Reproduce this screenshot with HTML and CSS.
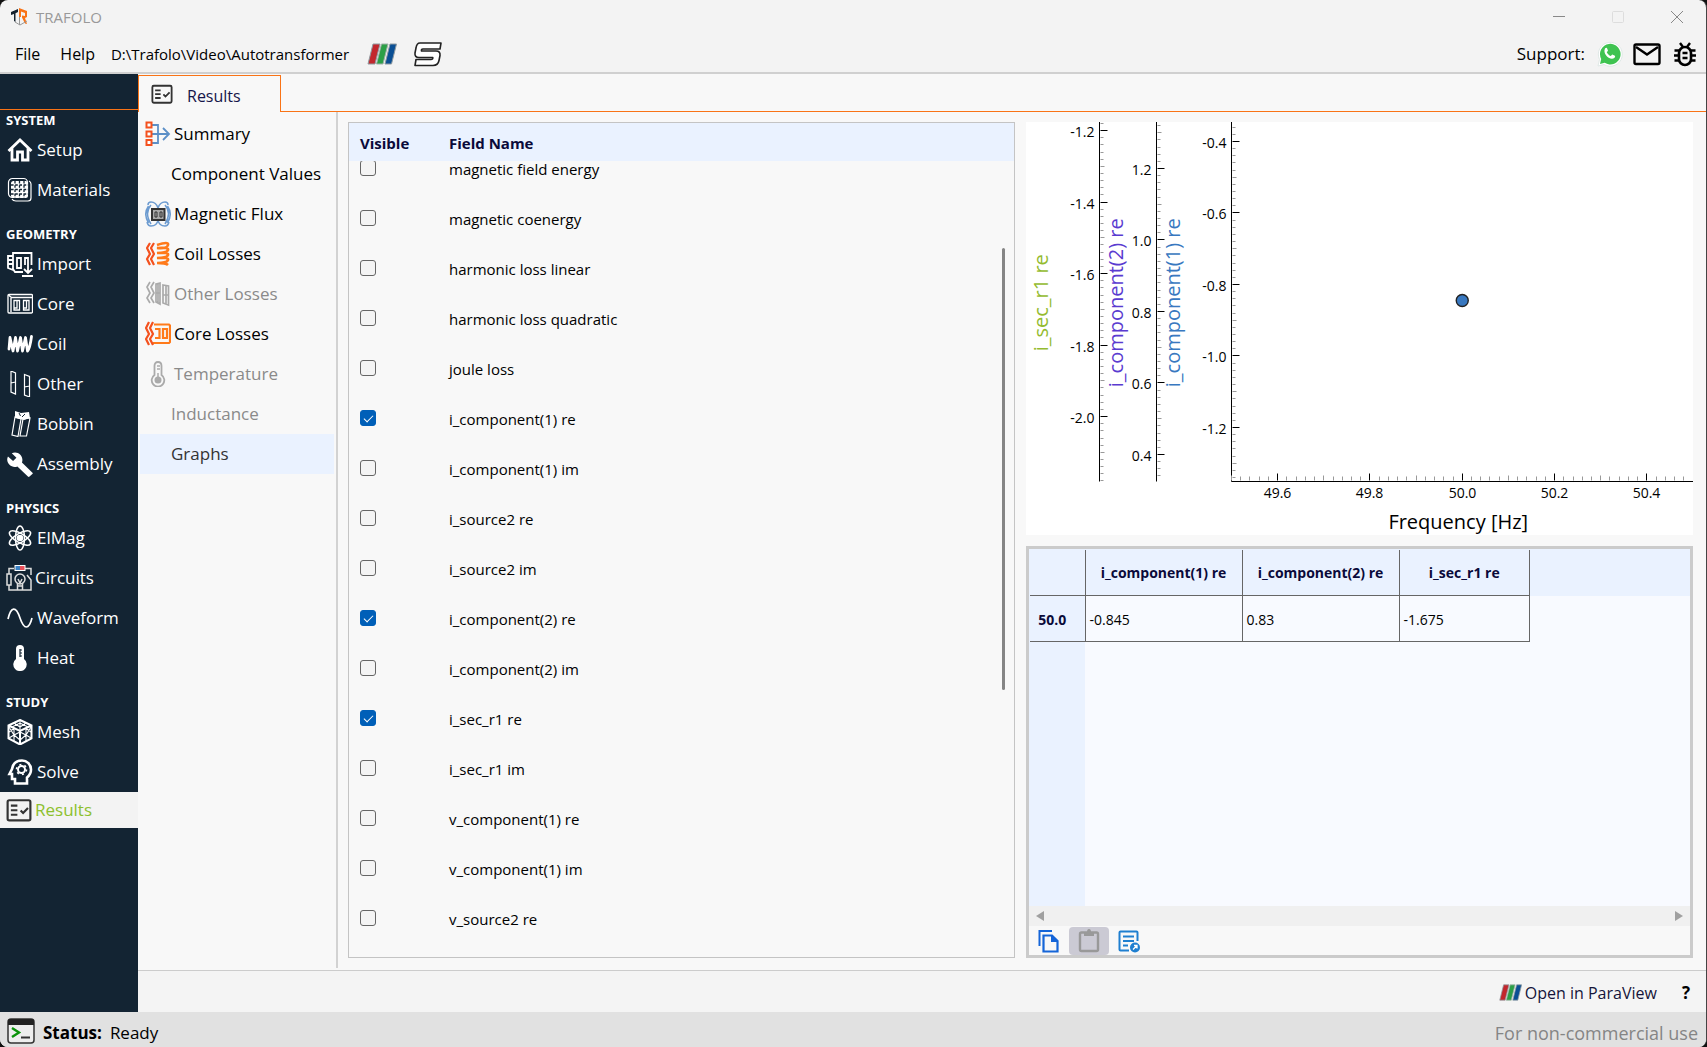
FILE: index.html
```html
<!DOCTYPE html>
<html lang="en">
<head>
<meta charset="utf-8">
<title>TRAFOLO</title>
<link rel="stylesheet" href="styles.css">
</head>
<body>
<svg class="defs" aria-hidden="true">
  <symbol id="paraview" viewBox="0 0 30 22">
    <path d="M6 1h7L8 21H1z" fill="#c2272d" stroke="#8f9aa0"/>
    <path d="M14.500 1h6.500L16 21H9.500z" fill="#2c9f47" stroke="#9fb0a8"/>
    <path d="M23 1h6.500L24.500 21H18z" fill="#0b4f94" stroke="#8f9aa0"/>
  </symbol>
  <symbol id="checklist" viewBox="0 0 24 24">
    <rect x="1.500" y="3" width="21" height="18.500" rx="1.500" fill="none" stroke="#333" stroke-width="2"/>
    <path d="M4.500 8h6M4.500 12.200h6M4.500 16.400h6M13.500 12.500l2.300 2.300 4.500-4.600" fill="none" stroke="#333" stroke-width="2"/>
  </symbol>
</svg>
<div class="window">
  <header class="titlebar">
    <svg class="logo" viewBox="0 0 18 20"><path d="M1 5l7-3v3L5.500 6.200V15L4 14V7L1 8z" fill="#15222e"/><path d="M9 1l8 3v6l-2 1 2 6-2-.5-3-6v-2l3 .5V6L11 4.500V10L9 10z" fill="#f97316"/><path d="M5 15l5 3 7-4M9.500 10v8" fill="none" stroke="#999"/></svg>
    <span class="app-name">TRAFOLO</span>
    <div class="window-buttons">
      <button type="button" aria-label="Minimize"><svg viewBox="0 0 14 14"><path d="M1 6.500h12" stroke="#888"/></svg></button>
      <button type="button" aria-label="Maximize" disabled><svg viewBox="0 0 14 14"><rect x="1.500" y="1.500" width="11" height="11" rx="1" fill="none" stroke="#ddd"/></svg></button>
      <button type="button" aria-label="Close"><svg viewBox="0 0 14 14"><path d="M1 1l12 12M13 1L1 13" stroke="#888"/></svg></button>
    </div>
  </header>
  <div class="menubar">
    <button type="button">File</button>
    <button type="button">Help</button>
    <span class="path">D:\Trafolo\Video\Autotransformer</span>
    <button type="button" class="tool" aria-label="ParaView"><svg class="pv-large"><use href="#paraview"/></svg></button>
    <button type="button" class="tool" aria-label="Simulation"><svg class="pv-large s-logo" viewBox="0 0 30 26"><path d="M7 2h21l-1 6H10q-2 0-1.500 2h14.500q4.500 0 4 4.500l-1 5q-1 5-6 5H2l1-6H18q2 0 1.800-2H6q-4.500 0-4-4.500l1-5Q3.700 2 7 2z" fill="#fff" stroke="#222" stroke-width="1.600" stroke-linejoin="round"/></svg></button>
    <div class="support">
      <span>Support:</span>
      <a href="#whatsapp" aria-label="WhatsApp"><svg viewBox="0 0 28 28"><path d="M3 26l1.500-6.500A12 12 0 1 1 9 24.500z" fill="#fff" stroke="#dfe8e6"/><path d="M5 24l1.200-5A10.300 10.300 0 1 1 9.700 22.800z" fill="#3fc351"/><path d="M10 8.500c1-1 2-.8 2.300.2l.7 2-1.200 1.500c.8 1.900 2.200 3 4 3.800l1.400-1.500 2.300 1c1 .5.8 1.600-.2 2.600-4.500 3-12-4.500-9.300-9.600z" fill="#fff"/></svg></a>
      <a href="#mail" aria-label="Mail"><svg viewBox="0 0 28 28"><rect x="1.500" y="4.500" width="25" height="19.500" rx="1.500" fill="none" stroke="#000" stroke-width="2.400"/><path d="M3 7l11 7.500L25 7" fill="none" stroke="#000" stroke-width="2.400"/></svg></a>
      <a href="#bug" aria-label="Report a bug"><svg viewBox="0 0 28 28"><rect x="8" y="7" width="12" height="18" rx="6" fill="none" stroke="#000" stroke-width="2.600"/><path d="M11.500 13h5M11.500 18h5M3.500 10.500h5M3 15.500h5M3.500 20.500h5M24.500 10.500h-5M25 15.500h-5M24.500 20.500h-5M9 3l3 4M19 3l-3 4" stroke="#000" stroke-width="2.400"/></svg></a>
    </div>
  </div>

  <div class="workspace">
    <nav class="sidebar" aria-label="Modules">
      <h2 class="first">SYSTEM</h2>
      <button type="button"><svg viewBox="0 0 26 26"><path d="M1.500 14L13 3l11.500 11M5 11.500V23h5.500v-8h5v8H21V11.500" fill="none" stroke="#fff" stroke-width="2.800"/></svg>Setup</button>
      <button type="button"><svg viewBox="0 0 26 26"><g fill="none" stroke="#fff" stroke-width="1.200"><rect x="1.500" y="1.500" width="19" height="19" rx="4"/><path d="M22 4q2 1 2 3v14q0 3-3 3H9q-3 0-4-2"/></g><rect x="4" y="4" width="17" height="17" rx="2.500" fill="#fff"/><path d="M8 4v17M12.500 4v17M17 4v17M4 8h17M4 12.500h17M4 17h17" stroke="#132433" stroke-width="1.300" stroke-dasharray="2.600 1.600"/></svg>Materials</button>
      <h2>GEOMETRY</h2>
      <button type="button"><svg viewBox="0 0 26 26"><g fill="none" stroke="#fff" stroke-width="1.800"><path d="M16 21H8l-2-3V2h18.500v12M6 5H1v12l5 2M1 9h5M1 13h5"/><path d="M10 7h4v10h-4zM18 14V7h3v5M21 12v9M17 18l4 4 4-4M15 25h11"/></g></svg>Import</button>
      <button type="button"><svg viewBox="0 0 26 26"><g fill="none" stroke="#fff"><rect x="1" y="3.500" width="24.500" height="18.500" rx="1" stroke-width="1.300"/><path d="M1.500 4l3 2.500h20.500" stroke-width="1.400"/><path d="M4 7v14" stroke-width="1.400"/><path d="M7 9.500h5.500V19H7zM16.500 9.500H22V19h-5.500zM10 10v7H7M19.500 10v7h-3" stroke-width="1.300"/></g></svg>Core</button>
      <button type="button"><svg viewBox="0 0 26 26"><path d="M2 18L3 6.500 6 20 8.500 6.500 10.500 20 13.500 6.500 15.500 20 18.500 6.500 20.500 20Q23 17 24.500 5.500" fill="none" stroke="#fff" stroke-width="2.800" stroke-linecap="round" stroke-linejoin="round"/></svg>Coil</button>
      <button type="button"><svg viewBox="0 0 26 26"><path d="M4 0l4.500 2v21L4 21zM4 12l4.500-1M17.500 3.500l5 2V26l-5-2zM17.500 16l5-1" fill="none" stroke="#fff" stroke-width="1.200"/></svg>Other</button>
      <button type="button"><svg viewBox="0 0 26 26"><path d="M8 6L5 24l6 1.500L14 8zM16 8l-3 17h6.500L23 7z" fill="none" stroke="#fff" stroke-width="1.200"/><path d="M8 0l6 2 8-1 1 6-6 2-9-2z" fill="#fff"/><path d="M12 2l1.500 3M15 6l3-3" stroke="#132433"/></svg>Bobbin</button>
      <button type="button"><svg viewBox="0 0 24 24"><path d="M23.500 20l-9.700-9.400c.9-2.300.4-5-1.500-7.200-2-2.200-5.400-2.600-7.900-1.400L8.700 6.200 5.600 9.200.9 5C-.4 7.500.1 10.600 2.300 12.700c2 2 4.800 2.500 7.300 1.500l9.700 9.400c.4.500 1.100.5 1.500 0l2.600-2.300c.5-.4.500-1 .1-1.300z" fill="#fff"/></svg>Assembly</button>
      <h2>PHYSICS</h2>
      <button type="button"><svg viewBox="0 0 26 26"><g fill="none" stroke="#fff" stroke-width="1.500"><ellipse cx="13" cy="13" rx="4.500" ry="12"/><ellipse cx="13" cy="13" rx="4.500" ry="12" transform="rotate(60 13 13)"/><ellipse cx="13" cy="13" rx="4.500" ry="12" transform="rotate(-60 13 13)"/></g><circle cx="13" cy="13" r="3.300" fill="#fff"/></svg>ElMag</button>
      <button type="button" class="tight"><svg viewBox="0 0 26 26"><g fill="none" stroke="#ddd" stroke-width="1.500"><path d="M8 3.500H3V9M3 20v5h22V15l-4-5M18 3.500h7V10"/><rect x="1" y="9" width="4" height="11"/><circle cx="14" cy="14" r="5"/><path d="M11.500 18v7M16.500 18v7M12 14l2 4 2-4M11.500 21h5"/></g><path d="M8.500 0h11v6h-11z" fill="#fff"/><path d="M9.500 1H14v4H9.500z" fill="#3b82c4"/><path d="M14 1h4.500v4H14z" fill="#e8505b"/></svg>Circuits</button>
      <button type="button"><svg viewBox="0 0 26 26"><path d="M1 14C4 1 9 1 13 13s9 12 12 0" fill="none" stroke="#fff" stroke-width="1.700"/></svg>Waveform</button>
      <button type="button"><svg viewBox="0 0 26 26"><path d="M9 14V4q0-4 4-4t4 4v10a6.700 6.700 0 1 1-8 0z" fill="#fff"/><path d="M13 4v8M13 5h2M13 8h2M13 11h2" stroke="#132433" stroke-width="1.200"/></svg>Heat</button>
      <h2>STUDY</h2>
      <button type="button"><svg viewBox="0 0 26 26"><g fill="none" stroke="#fff"><path d="M13 1l11.500 5.500v13L13 25.500 1.500 19.500v-13zM1.500 6.500L13 12l11.500-5.500M13 12v13" stroke-width="2"/><path d="M7 4l6 4 6-4M13 1v11M5 8l8-4 8 4M2 13l5-3.500V22M2 19l5-3 6 5M2 8l5 8 6-3M13 21l6-5 5 3M24 8l-5 8-6-3M19 9.500V22M24 13l-5-3.500" stroke-width="1.100"/></g></svg>Mesh</button>
      <button type="button"><svg viewBox="0 0 26 26"><path d="M8 24.500V20H5v-5H2.500L5 10C6 4 10 1.500 15 1.500c5 0 9 4 9 9 0 4-1.500 6-4 8v6z" fill="none" stroke="#fff" stroke-width="2.600"/><circle cx="14.500" cy="10.500" r="3.500" fill="none" stroke="#fff" stroke-width="2"/><circle cx="14.500" cy="10.500" r="5" fill="none" stroke="#fff" stroke-width="1.600" stroke-dasharray="2 3.200"/></svg>Solve</button>
      <button type="button" class="tight active" aria-current="page"><svg viewBox="0 0 24 24"><use href="#checklist"/></svg>Results</button>
    </nav>

    <main class="content">
      <div class="tabs" role="tablist">
        <button type="button" role="tab" aria-selected="true"><svg viewBox="0 0 24 24"><use href="#checklist"/></svg><span>Results</span></button>
        <div class="tab-rest"></div>
      </div>
      <div class="body">
        <nav class="subnav" aria-label="Results">
          <button type="button"><svg viewBox="0 0 26 26"><path d="M7 4h6v18H7M7 13h17M18 7l6 6-6 6" fill="none" stroke="#5b8fc7" stroke-width="1.800"/><path d="M1.500 1.500h5v5h-5zM1.500 10.500h5v5h-5zM1.500 19h5v5h-5z" fill="#fff" stroke="#f4511e" stroke-width="2"/></svg>Summary</button>
          <button type="button" class="plain">Component Values</button>
          <button type="button"><svg viewBox="0 0 26 26"><g fill="none" stroke="#6c9bd0" stroke-width="1.500"><path d="M6 4Q-1 12 6 23M3.500 5Q-2 13 3.500 22M20 4q7 8 0 19M22.500 5q5.500 8 0 17M13 7Q11 1 6 1 3 1 3 4M13 7q2-6 7-6 3 0 3 3M13 19q-1 6-7 6-3 0-4-4M13 19q1 6 7 6 3 0 4-4"/></g><rect x="7" y="8" width="12.500" height="11" fill="#aaa" stroke="#333" stroke-width="2"/><path d="M10 11h2v5h-2zM15 11h2v5h-2z" fill="none" stroke="#333"/></svg>Magnetic Flux</button>
          <button type="button"><svg viewBox="0 0 26 26"><path d="M5 2L2 7 5 13 2 18 5 24M9 2L6 7 9 13 6 18 9 24" fill="none" stroke="#f4511e" stroke-width="2.200" stroke-linejoin="round"/><path d="M12 4q12-4 11 0t-11 3q12-1 11 2t-11 3q12-1 11 2t-11 3q12-1 11 2t-11 3q9 0 11 2" fill="none" stroke="#ff7a1a" stroke-width="2.600"/></svg>Coil Losses</button>
          <button type="button" disabled><svg viewBox="0 0 26 26"><path d="M5 1L2 6 5 12 2 17 5 22M9 1L6 6 9 12 6 17 9 22M11 3l4-1v21l-4-2zM18 4l5.500 1v19L18 22zM13 3v19M21 5v18M11 12h4M18 14h5" fill="none" stroke="#aaa" stroke-width="1.700"/></svg>Other Losses</button>
          <button type="button"><svg viewBox="0 0 26 26"><path d="M9 3.500h15l1 1V21l-1 1H8M10 8h4.500v9H10M18 8h4v9h-4z" fill="none" stroke="#ff7a1a" stroke-width="2.200"/><path d="M4 1L1 7 4 13 1 18 4 24M8 1L5 7 8 13 5 18 8 24" fill="none" stroke="#f4511e" stroke-width="2.200" stroke-linejoin="round"/></svg>Core Losses</button>
          <button type="button" disabled><svg viewBox="0 0 26 26"><path d="M9.500 14V5q0-4 3.500-4t3.500 4v9a6.300 6.300 0 1 1-7 0z" fill="none" stroke="#aaa" stroke-width="1.800"/><circle cx="13" cy="19" r="3.500" fill="#aaa"/><path d="M13 12v6M12 5h3M12 8h3" stroke="#aaa" stroke-width="1.500"/></svg>Temperature</button>
          <button type="button" class="plain" disabled>Inductance</button>
          <button type="button" class="plain active" aria-current="true">Graphs</button>
        </nav>

        <div class="panes">
          <section class="fields">
            <div class="fields-scroll">
              <table>
                <thead><tr><th class="col-visible" scope="col">Visible</th><th scope="col">Field Name</th></tr></thead>
                <tbody>
                  <tr><td><input type="checkbox" id="f1"></td><td><label for="f1">magnetic field energy</label></td></tr>
                  <tr><td><input type="checkbox" id="f2"></td><td><label for="f2">magnetic coenergy</label></td></tr>
                  <tr><td><input type="checkbox" id="f3"></td><td><label for="f3">harmonic loss linear</label></td></tr>
                  <tr><td><input type="checkbox" id="f4"></td><td><label for="f4">harmonic loss quadratic</label></td></tr>
                  <tr><td><input type="checkbox" id="f5"></td><td><label for="f5">joule loss</label></td></tr>
                  <tr><td><input type="checkbox" id="f6" checked></td><td><label for="f6">i_component(1) re</label></td></tr>
                  <tr><td><input type="checkbox" id="f7"></td><td><label for="f7">i_component(1) im</label></td></tr>
                  <tr><td><input type="checkbox" id="f8"></td><td><label for="f8">i_source2 re</label></td></tr>
                  <tr><td><input type="checkbox" id="f9"></td><td><label for="f9">i_source2 im</label></td></tr>
                  <tr><td><input type="checkbox" id="f10" checked></td><td><label for="f10">i_component(2) re</label></td></tr>
                  <tr><td><input type="checkbox" id="f11"></td><td><label for="f11">i_component(2) im</label></td></tr>
                  <tr><td><input type="checkbox" id="f12" checked></td><td><label for="f12">i_sec_r1 re</label></td></tr>
                  <tr><td><input type="checkbox" id="f13"></td><td><label for="f13">i_sec_r1 im</label></td></tr>
                  <tr><td><input type="checkbox" id="f14"></td><td><label for="f14">v_component(1) re</label></td></tr>
                  <tr><td><input type="checkbox" id="f15"></td><td><label for="f15">v_component(1) im</label></td></tr>
                  <tr><td><input type="checkbox" id="f16"></td><td><label for="f16">v_source2 re</label></td></tr>
                </tbody>
              </table>
            </div>
            <div class="thumb"></div>
          </section>

          <div class="results">
            <div class="chart"><svg id="chart" role="img" aria-label="Frequency chart"></svg></div>
            <section class="data">
              <div class="data-area">
                <table>
                  <thead><tr><th class="corner"></th><th class="wide" scope="col">i_component(1) re</th><th class="wide" scope="col">i_component(2) re</th><th class="narrow" scope="col">i_sec_r1 re</th></tr></thead>
                  <tbody><tr><th scope="row">50.0</th><td>-0.845</td><td>0.83</td><td>-1.675</td></tr></tbody>
                </table>
              </div>
              <div class="hscroll">
                <svg viewBox="0 0 8 12"><path d="M8 1v10L0 6z" fill="#a0a0a0"/></svg>
                <svg viewBox="0 0 8 12"><path d="M0 1v10l8-5z" fill="#a0a0a0"/></svg>
              </div>
              <div class="data-tools">
                <button type="button" aria-label="Copy"><svg viewBox="0 0 24 24"><path d="M2.500 17V2H15" fill="none" stroke="#1565d8" stroke-width="2"/><path d="M6.500 6.500H15l5.500 5.500v10.500h-14z" fill="none" stroke="#1565d8" stroke-width="2.200"/><path d="M14 6v7h7z" fill="#1565d8"/></svg></button>
                <button type="button" class="muted" aria-label="Paste" disabled><svg viewBox="0 0 24 24"><rect x="3" y="3.500" width="18" height="18.500" rx="1.500" fill="none" stroke="#999" stroke-width="2.400"/><path d="M7 3h3q0-3 2-3t2 3h3v4H7z" fill="#999"/></svg></button>
                <button type="button" aria-label="Export"><svg viewBox="0 0 24 24"><path d="M12 21.500H3.500q-1 0-1-1v-17q0-1 1-1h16q1 0 1 1V12" fill="none" stroke="#1f7fd0" stroke-width="2"/><path d="M6 7.500h11M6 12h11M6 16.500h5" stroke="#1f7fd0" stroke-width="1.800"/><circle cx="18" cy="18.500" r="5" fill="#1f7fd0"/><path d="M16 20.500l4-4M17 16.500h3v3" fill="none" stroke="#fff" stroke-width="1.300"/></svg></button>
              </div>
            </section>
          </div>
        </div>
      </div>
      <div class="actions">
        <button type="button"><svg class="pv-small"><use href="#paraview"/></svg>Open in ParaView</button>
        <button type="button" class="help" aria-label="Help">?</button>
      </div>
    </main>
  </div>

  <footer class="statusbar">
    <svg viewBox="0 0 28 28"><rect x="1" y="2" width="26" height="24" rx="3" fill="#eee" stroke="#333" stroke-width="1.500"/><path d="M1 8V4q0-2 2-2h22q2 0 2 2v4z" fill="#222"/><path d="M5 11l7 4.500L5 20" fill="none" stroke="#0c930c" stroke-width="2.400"/><path d="M14 20.500h9" stroke="#333" stroke-width="2"/></svg>
    <strong>Status:</strong>
    <span>Ready</span>
    <span class="license">For non-commercial use</span>
  </footer>
</div>
<script src="app.js"></script>
</body>
</html>
```
FILE: styles.css
```css
* { box-sizing: border-box; }
html, body { height: 100%; margin: 0; }
body {
  background: #111;
  color: #000;
  font-family: "Open Sans", "Noto Sans", sans-serif;
  font-size: 17px;
  line-height: 24px;
}
button {
  border: 0;
  background: none;
  padding: 0;
  color: inherit;
  font: inherit;
}
svg { display: block; flex: none; }
.defs { position: absolute; width: 0; height: 0; }

.window {
  display: flex;
  flex-direction: column;
  height: 100vh;
  border-right: 1px solid #444;
  border-radius: 8px;
  background: #f3f3f3;
  overflow: hidden;
}

.titlebar {
  display: flex;
  align-items: center;
  flex: none;
  gap: 8px;
  height: 34px;
  padding-left: 10px;
}
.logo { width: 18px; height: 20px; }
.app-name { color: #999; font-size: 15px; }
.window-buttons { display: flex; margin-left: auto; }
.window-buttons button { display: grid; place-items: center; width: 59px; height: 32px; }
.window-buttons svg { width: 14px; height: 14px; }

.menubar {
  display: flex;
  align-items: center;
  flex: none;
  height: 40px;
  padding: 2px 7px 0 15px;
  border-bottom: 2px solid #d0d0d0;
  font-size: 16px;
}
.menubar button + button { margin-left: 20px; }
.path { margin: 0 18px 0 16px; font-size: 15px; }
.menubar .tool + .tool { margin-left: 16px; }
.pv-large { width: 30px; height: 22px; }
.s-logo { height: 26px; }
.support {
  display: flex;
  align-items: center;
  gap: 10px;
  margin-left: auto;
  font-size: 17px;
}
.support svg { width: 28px; height: 28px; }

.workspace { display: flex; flex: 1; min-height: 0; }

.sidebar {
  width: 138px;
  flex: none;
  background: #132433;
  color: #fff;
}
.sidebar h2 {
  margin: 14px 0 0;
  padding-left: 6px;
  font-size: 13px;
  line-height: 20px;
}
.sidebar h2.first {
  margin-top: 35px;
  border-top: 1px solid #f97316;
}
.sidebar button {
  display: flex;
  align-items: center;
  gap: 4px;
  width: 100%;
  height: 40px;
  padding-left: 7px;
}
.sidebar svg { width: 26px; height: 26px; }
.sidebar .tight { gap: 3px; padding-left: 6px; }
.sidebar .active { height: 36px; background: #f3f3f3; color: #8dc02d; }

.content {
  display: flex;
  flex-direction: column;
  flex: 1;
  min-width: 0;
  background: #f8f8f8;
}
.tabs { display: flex; flex: none; height: 38px; }
.tabs button {
  display: flex;
  align-items: center;
  gap: 14px;
  width: 143px;
  margin-top: 1px;
  padding-left: 12px;
  border: 1px solid #f97316;
  border-bottom: 0;
  color: #15154a;
  font-size: 16px;
}
.tabs svg { width: 22px; height: 22px; }
.tabs span { padding-top: 4px; }
.tab-rest { flex: 1; border-bottom: 1px solid #f97316; }

.body { display: flex; flex: 1; min-height: 0; }
.subnav {
  width: 200px;
  flex: none;
  margin-bottom: 2px;
  padding: 2px 2px 0;
  border-right: 2px solid #d2d2d2;
}
.subnav button {
  display: flex;
  align-items: center;
  gap: 3px;
  width: 100%;
  height: 40px;
  padding-left: 5px;
}
.subnav svg { width: 26px; height: 26px; }
.subnav .plain { padding-left: 31px; }
.subnav :disabled { color: #8a8a8a; }
.subnav .active { background: #eaf2ff; color: #333; }

.panes {
  display: grid;
  grid-template-columns: 1fr 1fr;
  gap: 11px;
  flex: 1;
  min-width: 0;
  padding: 10px 13px 12px 10px;
}

.fields {
  position: relative;
  min-height: 0;
  border: 1px solid #c4c4c4;
  font-size: 15px;
}
.fields-scroll {
  height: 100%;
  padding-bottom: 36px;
  overflow-y: auto;
  scrollbar-width: none;
}
.fields table { width: 100%; border-spacing: 0; }
.fields th {
  position: sticky;
  top: 0;
  z-index: 1;
  height: 38px;
  padding: 2px 0 0;
  background: #eaf2ff;
  color: #0a0a3a;
  text-align: left;
}
.fields .col-visible { width: 100px; }
.fields th:first-child, .fields td:first-child { padding-left: 11px; }
.fields td { height: 50px; padding: 2px 0 0; }
.fields td:first-child { padding-top: 0; }
.fields input {
  display: grid;
  place-items: center;
  appearance: none;
  width: 16px;
  height: 16px;
  margin: 0;
  border: 1px solid #666;
  border-radius: 3px;
  background: #f4f4f4;
}
.fields input:checked { border-color: #005fb8; background: #005fb8; }
.fields input:checked::after {
  content: "";
  width: 8px;
  height: 4px;
  border: solid #fff;
  border-width: 0 0 1px 1px;
  transform: translateY(-1px) rotate(-45deg);
}
.thumb {
  position: absolute;
  top: 15%;
  right: 9px;
  width: 3px;
  height: 53%;
  border-radius: 2px;
  background: #858585;
}

.results {
  display: grid;
  grid-template-rows: 1fr 1fr;
  gap: 11px;
  min-width: 0;
  min-height: 0;
}
.chart { min-height: 0; overflow: hidden; background: #fff; }
.chart svg { width: 100%; height: 100%; }
.chart text { font-size: 14px; }
.chart .axis-title { font-size: 20px; text-anchor: middle; }

.data {
  display: flex;
  flex-direction: column;
  min-height: 0;
  border: 3px solid #cbcbcb;
  font-size: 14px;
}
.data-area {
  flex: 1;
  min-height: 0;
  padding: 1px;
  background: linear-gradient(90deg, #eaf2ff 56px, transparent 56px), linear-gradient(#eaf2ff 47px, #f8faff 47px);
}
.data table { border-collapse: collapse; table-layout: fixed; width: 500px; }
.data th { height: 46px; border: solid #666; border-width: 0 1px 1px; padding: 2px 0 0; color: #0a0a3a; }
.data th:first-child { border-left: 0; }
.data .corner { width: 55px; }
.data .wide { width: 157px; }
.data tbody th { padding-right: 10px; }
.data td { height: 46px; padding: 2px 4px 0; border: 1px solid #666; background: #f8faff; }
.hscroll {
  display: flex;
  align-items: center;
  justify-content: space-between;
  flex: none;
  height: 20px;
  padding: 0 7px;
  background: #f0f0f0;
}
.hscroll svg { width: 8px; height: 12px; }
.data-tools { display: flex; flex: none; height: 29px; padding: 1px 0 0; }
.data-tools button { display: grid; place-items: center; width: 40px; height: 28px; border-radius: 4px; }
.data-tools svg { width: 24px; height: 24px; }
.data-tools .muted { background: #cbcad4; }

.actions {
  display: flex;
  align-items: center;
  justify-content: flex-end;
  gap: 25px;
  flex: none;
  height: 42px;
  padding: 2px 16px 0 0;
  border-top: 1px solid #ccc;
  background: #f4f4f4;
  color: #15153a;
  font-size: 16px;
}
.actions button { display: flex; align-items: center; gap: 3px; }
.actions .help { color: #000; font-size: 17px; font-weight: 700; }
.pv-small { width: 23px; height: 17px; }

.statusbar {
  display: flex;
  align-items: center;
  flex: none;
  gap: 8px;
  height: 35px;
  padding: 6px 8px 0 7px;
  background: #e1e1e1;
}
.statusbar svg { width: 28px; height: 28px; margin-top: -4px; }
.license { margin-left: auto; color: #858585; font-size: 18px; }
```
FILE: app.js
```js
const scroller = document.querySelector('.fields-scroll');
scroller.scrollTop = 18;

const chart = document.getElementById('chart');
const NS = 'http://www.w3.org/2000/svg';

function add(name, attrs, text) {
  const el = document.createElementNS(NS, name);
  for (const key in attrs) el.setAttribute(key, attrs[key]);
  if (text !== undefined) el.textContent = text;
  chart.appendChild(el);
}

function line(x1, y1, x2, y2, stroke, width) {
  add('line', { x1, y1, x2, y2, stroke, 'stroke-width': width || 1 });
}

const span = 1.0056;
const axes = [
  { x: 73.5, top: -1.176, title: 'i_sec_r1 re', color: '#94bb2f', titleX: 22 },
  { x: 130.5, top: 1.33, title: 'i_component(2) re', color: '#5a3bd0', titleX: 97 },
  { x: 205.5, top: -0.3455, title: 'i_component(1) re', color: '#3878c0', titleX: 154 }
];

function draw() {
  chart.replaceChildren();
  const width = chart.clientWidth;
  const bottom = chart.clientHeight - 53.5;

  for (const axis of axes) {
    line(axis.x, 0, axis.x, bottom, '#000');
    const first = Math.floor(axis.top * 50);
    for (let n = first; n > (axis.top - span) * 50; n--) {
      const y = Math.floor((axis.top - n / 50) / span * bottom) + 0.5;
      const major = n % 10 === 0;
      const reach = major ? 8 : n % 5 === 0 ? 5 : 4;
      line(axis.x + 1, y, axis.x + reach, y, major ? '#000' : '#999');
      if (major) add('text', { x: axis.x - 5, y: y + 6, 'text-anchor': 'end' }, (n / 50).toFixed(1));
    }
    add('text', {
      class: 'axis-title', fill: axis.color,
      transform: `translate(${axis.titleX} ${bottom / 2 + 1}) rotate(-90)`
    }, axis.title);
  }

  const left = 205.5;
  line(left, bottom, width, bottom, '#000');
  for (let n = 2475; n <= 2525; n++) {
    const x = Math.floor(left + (n / 50 - 49.5) * (width - left)) + 0.5;
    const major = n % 10 === 0;
    line(x, bottom - (major ? 8 : n % 5 === 0 ? 6 : 5), x, bottom - 1, major ? '#000' : '#999');
    if (major) add('text', { x, y: bottom + 16, 'text-anchor': 'middle' }, (n / 50).toFixed(1));
  }
  add('text', { class: 'axis-title', x: (left + width) / 2 - 4, y: bottom + 47 }, 'Frequency [Hz]');

  const cy = (-0.3455 + 0.845) / span * bottom;
  add('circle', { cx: left + (width - left) / 2, cy, r: 6, fill: '#3878c0', stroke: '#222', 'stroke-width': 1.4 });
}

draw();
window.addEventListener('resize', draw);
```
